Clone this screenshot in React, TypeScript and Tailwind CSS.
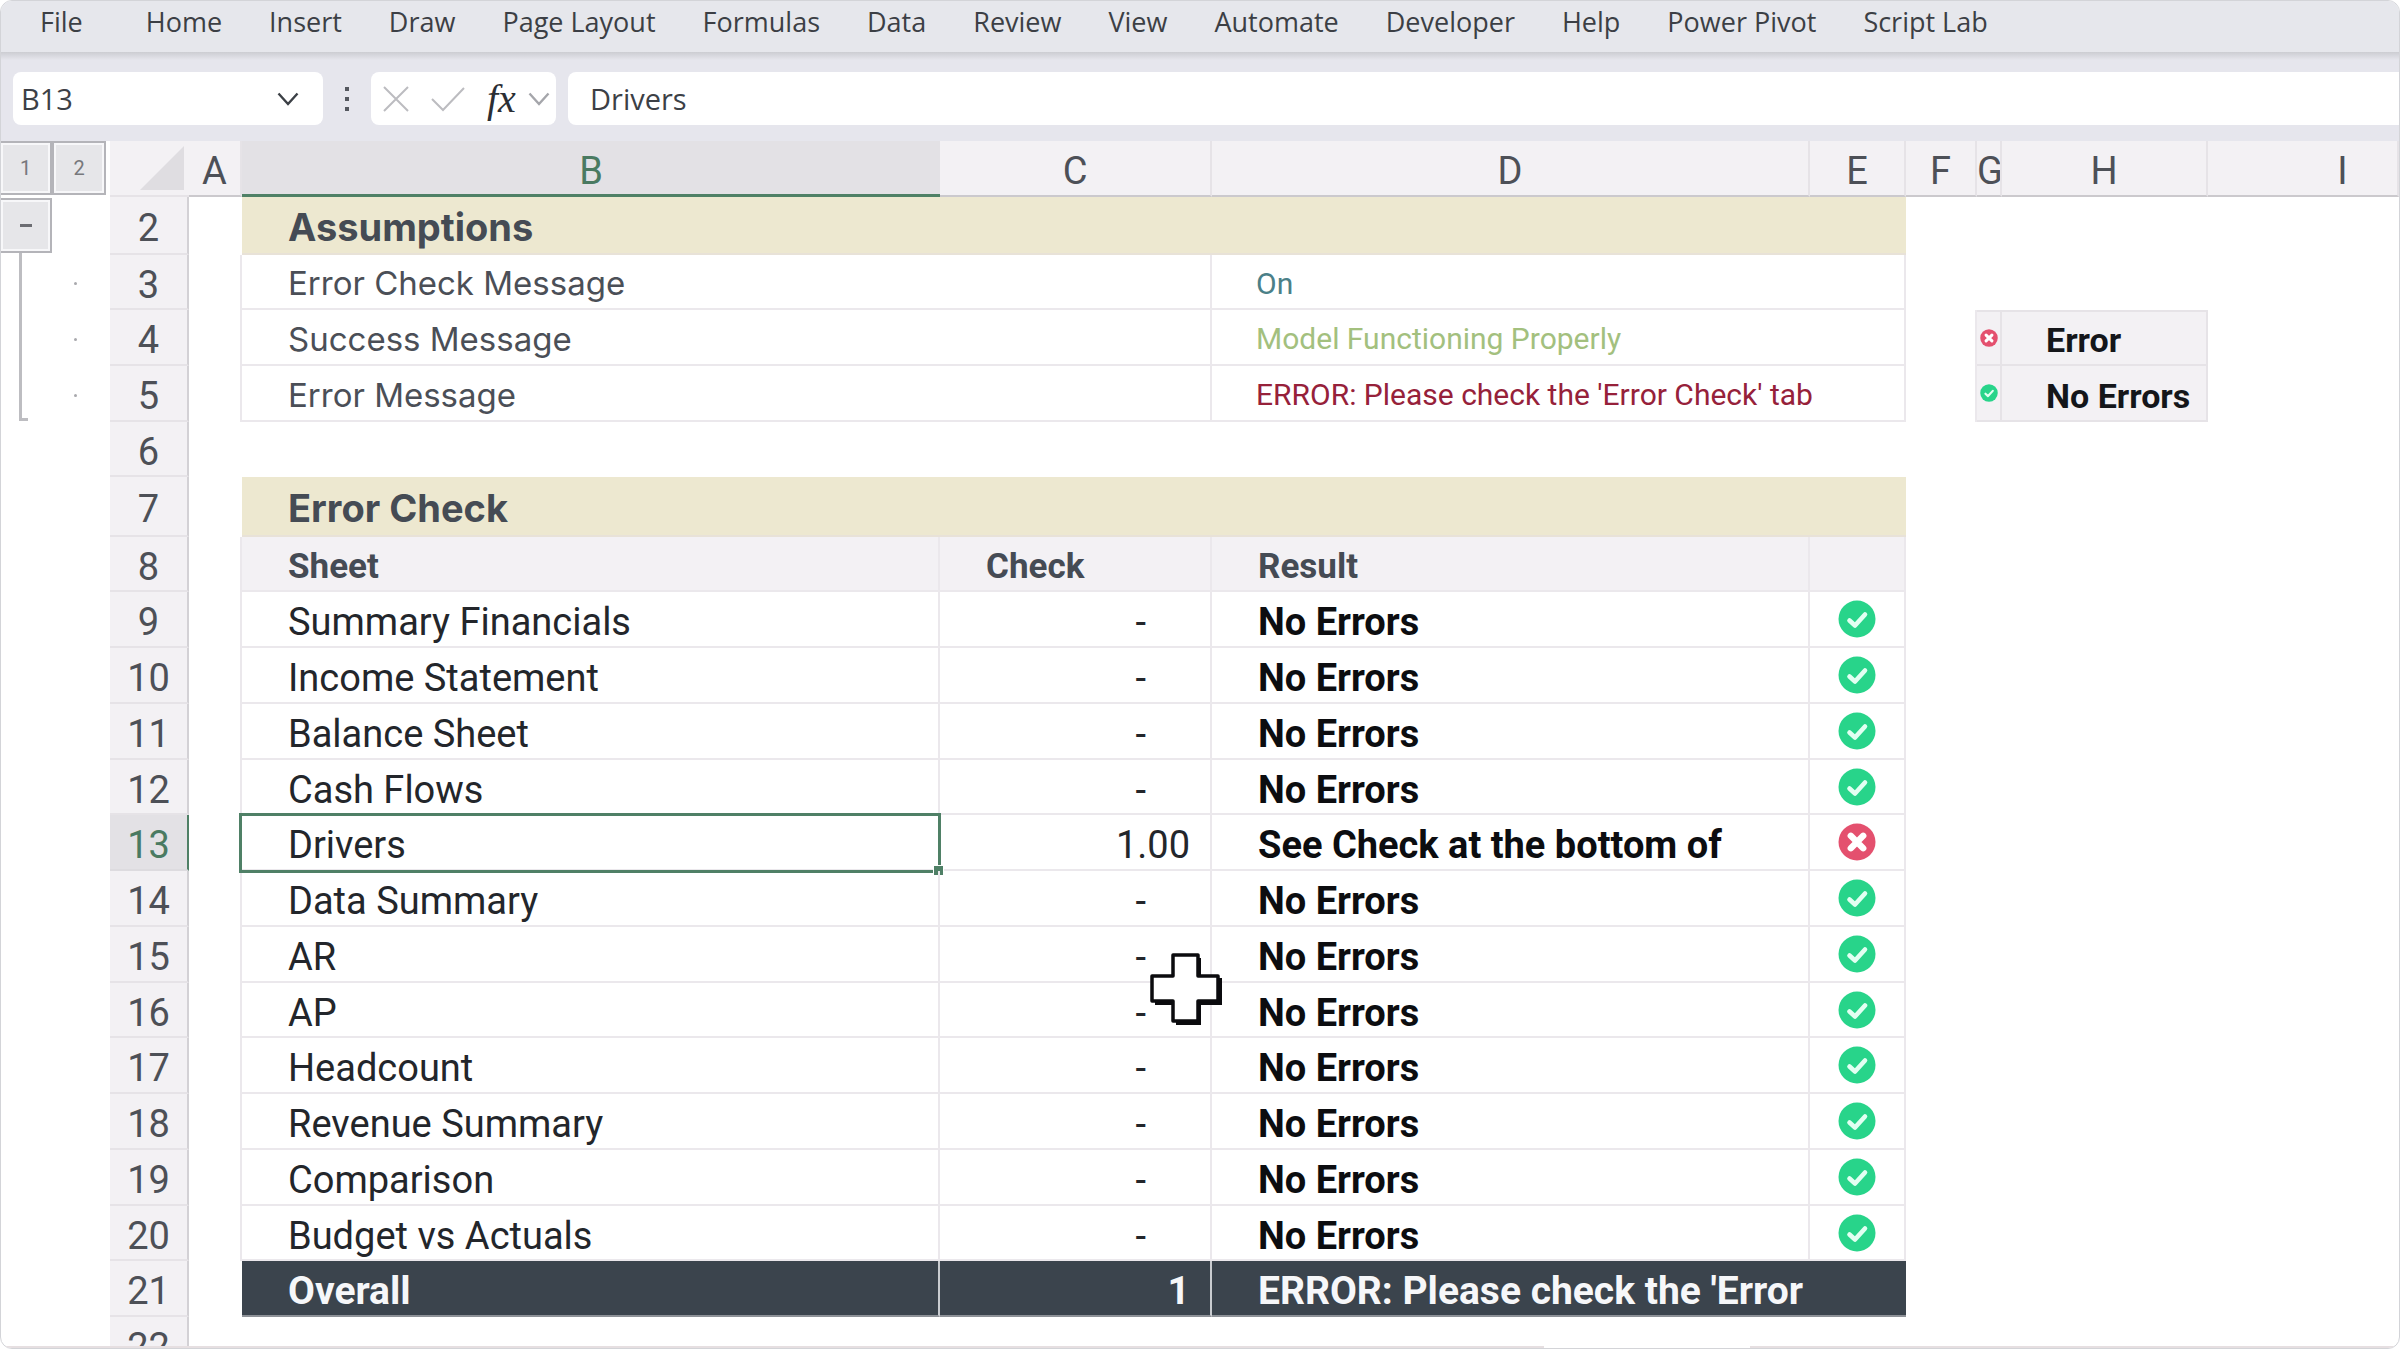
import { useState } from "react";
import type { ReactNode } from "react";

const MENU = [
  "File", "Home", "Insert", "Draw", "Page Layout", "Formulas", "Data", "Review",
  "View", "Automate", "Developer", "Help", "Power Pivot", "Script Lab",
];

type Check = { row: number; sheet: string; check: string; result: string; ok: boolean };

const CHECKS: Check[] = [
  { row: 9, sheet: "Summary Financials", check: "-", result: "No Errors", ok: true },
  { row: 10, sheet: "Income Statement", check: "-", result: "No Errors", ok: true },
  { row: 11, sheet: "Balance Sheet", check: "-", result: "No Errors", ok: true },
  { row: 12, sheet: "Cash Flows", check: "-", result: "No Errors", ok: true },
  { row: 13, sheet: "Drivers", check: "1.00", result: "See Check at the bottom of", ok: false },
  { row: 14, sheet: "Data Summary", check: "-", result: "No Errors", ok: true },
  { row: 15, sheet: "AR", check: "-", result: "No Errors", ok: true },
  { row: 16, sheet: "AP", check: "-", result: "No Errors", ok: true },
  { row: 17, sheet: "Headcount", check: "-", result: "No Errors", ok: true },
  { row: 18, sheet: "Revenue Summary", check: "-", result: "No Errors", ok: true },
  { row: 19, sheet: "Comparison", check: "-", result: "No Errors", ok: true },
  { row: 20, sheet: "Budget vs Actuals", check: "-", result: "No Errors", ok: true },
];

const SELECTED_ROW = 13;

function StatusIcon({ ok, small }: { ok: boolean; small?: boolean }) {
  return (
    <svg
      viewBox="0 0 38 38"
      className={small ? "block mx-auto size-[18px]" : "block mx-auto size-[38px]"}
      role="img"
      aria-label={ok ? "No error" : "Error"}
    >
      <circle cx="19" cy="19" r="18.5" fill={ok ? "#28d48a" : "#e4506e"} />
      {ok ? (
        <path
          d="M11.5 20.5l5.5 5L27 14.5"
          fill="none"
          stroke="#e2fff2"
          strokeWidth="4.6"
          strokeLinecap="round"
          strokeLinejoin="round"
        />
      ) : (
        <path d="M12.8 12.8l12.4 12.4M25.2 12.8L12.8 25.2" stroke="#fff" strokeWidth="6.4" strokeLinecap="round" />
      )}
    </svg>
  );
}

function Chevron({ className }: { className: string }) {
  return (
    <svg viewBox="0 0 22 14" className={className} fill="none" stroke="currentColor" strokeWidth="2.4" aria-hidden="true">
      <path d="M1.5 1.5L11 12l9.5-10.5" />
    </svg>
  );
}

function MenuBar() {
  return (
    <nav className="flex h-[51px] items-center gap-[47px] bg-[#e6e7ec] pb-2.5 pl-[39px] font-['Open_Sans',sans-serif] text-[27px] leading-8 text-[#3c3f45]">
      {MENU.map((item) => (
        <button key={item} type="button" className="whitespace-nowrap first:mr-4">
          {item}
        </button>
      ))}
    </nav>
  );
}

function FormulaBar() {
  const [name, setName] = useState("B13");
  const [formula, setFormula] = useState("Drivers");
  return (
    <div className="bg-[#e6e6ed]">
      <div className="h-2 bg-linear-to-b from-[#cccdd2] to-[#e6e6ed]" />
      <div className="flex h-[81px] items-start pt-3 pl-3 font-['Open_Sans',sans-serif] text-[29px] text-[#3c4046]">
        <div className="flex h-[53px] w-[310px] items-center rounded-lg bg-white pr-6 pl-2">
          <input
            aria-label="Name box"
            value={name}
            onChange={(e) => setName(e.target.value)}
            className="min-w-0 flex-1 outline-none"
          />
          <button type="button" aria-label="Show names">
            <Chevron className="h-3.5 w-[22px]" />
          </button>
        </div>
        <div className="flex h-[53px] w-12 flex-col items-center justify-center gap-1.5">
          <span className="size-1 bg-[#55585f]" />
          <span className="size-1 bg-[#55585f]" />
          <span className="size-1 bg-[#55585f]" />
        </div>
        <div className="flex h-[53px] w-[185px] items-center rounded-lg bg-white pl-3">
          <button type="button" aria-label="Cancel" className="text-[#bcbcc0]">
            <svg viewBox="0 0 26 28" className="h-7 w-[26px]" stroke="currentColor" strokeWidth="2" aria-hidden="true">
              <path d="M1 2l24 24M25 2L1 26" />
            </svg>
          </button>
          <button type="button" aria-label="Enter" className="ml-[22px] text-[#bcbcc0]">
            <svg viewBox="0 0 34 26" className="h-[26px] w-[34px]" fill="none" stroke="currentColor" strokeWidth="2" aria-hidden="true">
              <path d="M1 13l11 11L33 2" />
            </svg>
          </button>
          <button
            type="button"
            aria-label="Insert function"
            className="ml-[22px] font-['Liberation_Serif',serif] text-[40px] leading-none text-[#2b2e34] italic"
          >
            fx
          </button>
          <button type="button" aria-label="Function list" className="ml-3 text-[#a5a6ab]">
            <Chevron className="h-3.5 w-[22px]" />
          </button>
        </div>
        <input
          aria-label="Formula bar"
          value={formula}
          onChange={(e) => setFormula(e.target.value)}
          className="ml-3 h-[53px] min-w-0 flex-1 rounded-l-lg bg-white pl-[22px] outline-none"
        />
      </div>
    </div>
  );
}

function OutlineButton({ label, children, className }: { label: string; children: ReactNode; className: string }) {
  return (
    <button
      type="button"
      aria-label={label}
      className={`${className} border-2 border-[#b4b4b9] bg-[#e6e6e9] text-xl text-[#77787c] shadow-[inset_0_0_0_2px_#f7f7f9]`}
    >
      {children}
    </button>
  );
}

function OutlineGutter() {
  return (
    <aside className="w-[109px] shrink-0 font-['Roboto',sans-serif]">
      <div className="flex">
        <OutlineButton label="Level 1" className="h-[54px] w-[51px] border-l-0">1</OutlineButton>
        <OutlineButton label="Level 2" className="h-[54px] w-[54px]">2</OutlineButton>
      </div>
      <div className="flex pt-[3px]">
        <div className="w-[51px]">
          <OutlineButton label="Collapse rows" className="flex h-[55px] w-[51px] items-center justify-center border-l-0">
            <span className="h-[3px] w-3 bg-[#6c6d72]" />
          </OutlineButton>
          <div className="ml-[18px] h-[168px] w-[9px] border-b-[3px] border-l-[3px] border-[#bdbdc1]" />
        </div>
        <div className="flex flex-col gap-[53px] pt-[84px] pl-[22px]">
          <span className="size-[3px] rounded-full bg-[#a9a9ad]" />
          <span className="size-[3px] rounded-full bg-[#a9a9ad]" />
          <span className="size-[3px] rounded-full bg-[#a9a9ad]" />
        </div>
      </div>
    </aside>
  );
}

function ColumnHead({ children, className = "" }: { children?: ReactNode; className?: string }) {
  return (
    <th scope="col" className={`overflow-hidden border-r-2 border-b-2 border-r-[#e6e3e7] border-b-[#cbc9cd] p-0 pt-1.5 font-normal ${className}`}>
      {children}
    </th>
  );
}

function RowHead({ row }: { row: number }) {
  const selected = row === SELECTED_ROW;
  return (
    <th
      scope="row"
      className={`border-r-2 border-b-2 p-0 pt-1.5 text-[38px] font-normal ${
        selected
          ? "border-r-[#4f8066] border-b-[#dddbdf] bg-[#e3e1e5] text-[#4a7a61]"
          : "border-r-[#d3d1d5] border-b-[#e6e3e7] bg-[#f3f1f4] text-[#4d5057]"
      }`}
    >
      {row}
    </th>
  );
}

const CELL = "border-r-2 border-b-2 border-[#ebe8ec] p-0";
const EDGE = "border-r-2 border-r-[#ebe8ec] p-0";
const BAND =
  "border-b-2 border-[#e8e2d8] bg-[#ede8d0] p-0 pt-1 pl-[46px] text-left font-['Inter',sans-serif] font-bold text-[#454b54]";
const LABEL = "pt-1 pl-[46px] text-left font-['Inter',sans-serif] text-[33px] font-normal text-[#4b4f57]";
const LEGEND = "border-2 border-l-0 border-[#e6e3e7] bg-[#f3f1f4] p-0";
const TOTAL = "border-b-2 border-b-[#8d9197] bg-[#3b444d] p-0 pt-1.5";

function Sheet() {
  return (
    <table className="w-full min-w-0 table-fixed border-separate border-spacing-0 self-start font-['Roboto',sans-serif] text-[38px] leading-none text-[#23262b]">
      <colgroup>
        <col className="w-[79px]" />
        <col className="w-[53px]" />
        <col className="w-[698px]" />
        <col className="w-[272px]" />
        <col className="w-[598px]" />
        <col className="w-[96px]" />
        <col className="w-[71px]" />
        <col className="w-[25px]" />
        <col className="w-[206px]" />
        <col />
      </colgroup>
      <thead>
        <tr className="h-14 bg-[#f3f1f4] text-[#4d5057]">
          <td className="border-b-2 border-[#e6e3e7] p-0">
            <svg viewBox="0 0 44 44" className="ml-[30px] size-11" aria-hidden="true">
              <path d="M44 0v44H0z" fill="#dfdde1" />
            </svg>
          </td>
          <ColumnHead>A</ColumnHead>
          <th scope="col" className="border-b-[3px] border-[#4f8066] bg-[#e3e1e5] p-0 pt-1.5 font-normal text-[#4a7a61]">
            B
          </th>
          <ColumnHead>C</ColumnHead>
          <ColumnHead>D</ColumnHead>
          <ColumnHead>E</ColumnHead>
          <ColumnHead>F</ColumnHead>
          <ColumnHead>G</ColumnHead>
          <ColumnHead>H</ColumnHead>
          <ColumnHead className="border-r-0 pl-20">I</ColumnHead>
        </tr>
      </thead>
      <tbody>
        <tr className="h-[58px]">
          <RowHead row={2} />
          <td className="p-0" />
          <th colSpan={4} className={BAND}>Assumptions</th>
        </tr>
        <tr className="h-[55px]">
          <RowHead row={3} />
          <td className={EDGE} />
          <th scope="row" colSpan={2} className={`${CELL} ${LABEL}`}>Error Check Message</th>
          <td colSpan={2} className={`${CELL} pt-1 pl-11 text-[30px] text-[#4b8088]`}>On</td>
        </tr>
        <tr className="h-14">
          <RowHead row={4} />
          <td className={EDGE} />
          <th scope="row" colSpan={2} className={`${CELL} ${LABEL}`}>Success Message</th>
          <td colSpan={2} className={`${CELL} pt-1 pl-11 text-[30px] text-[#a3c07e]`}>Model Functioning Properly</td>
          <td className={EDGE} />
          <td className={LEGEND}><StatusIcon ok={false} small /></td>
          <td className={`${LEGEND} pt-1 pl-11 text-[34px] font-bold text-[#14161a]`}>Error</td>
        </tr>
        <tr className="h-14">
          <RowHead row={5} />
          <td className={EDGE} />
          <th scope="row" colSpan={2} className={`${CELL} ${LABEL}`}>Error Message</th>
          <td colSpan={2} className={`${CELL} pt-1 pl-11 text-[30px] text-[#96213a]`}>
            ERROR: Please check the 'Error Check' tab
          </td>
          <td className={EDGE} />
          <td className={`${LEGEND} border-t-0`}><StatusIcon ok small /></td>
          <td className={`${LEGEND} border-t-0 pt-1.5 pl-11 text-[34px] font-bold whitespace-nowrap text-[#14161a]`}>No Errors</td>
        </tr>
        <tr className="h-[55px]">
          <RowHead row={6} />
        </tr>
        <tr className="h-[60px]">
          <RowHead row={7} />
          <td className="p-0" />
          <th colSpan={4} className={BAND}>Error Check</th>
        </tr>
        <tr className="h-[55px] text-[35px] text-[#454b54]">
          <RowHead row={8} />
          <td className={EDGE} />
          <th scope="col" className={`${CELL} bg-[#f3f1f4] pt-1.5 pl-[46px] text-left`}>Sheet</th>
          <th scope="col" className={`${CELL} bg-[#f3f1f4] pt-1.5 pl-[46px] text-left`}>Check</th>
          <th scope="col" className={`${CELL} bg-[#f3f1f4] pt-1.5 pl-[46px] text-left`}>Result</th>
          <td className={`${CELL} bg-[#f3f1f4]`} />
        </tr>
        {CHECKS.map((c) => (
          <tr key={c.row} className={c.row % 4 === 0 ? "h-[55px]" : "h-14"}>
            <RowHead row={c.row} />
            <td className={EDGE} />
            <td className={`${CELL} relative pt-1.5 pl-[46px]`}>
              {c.sheet}
              {c.row === SELECTED_ROW && (
                <span className="absolute -top-0.5 -right-[3px] -bottom-1 -left-[3px] border-[3px] border-[#4f8066]">
                  <span className="absolute -right-1.5 -bottom-1.5 size-[11px] border border-white bg-[#4f8066]" />
                </span>
              )}
            </td>
            <td className={`${CELL} pt-1.5 text-right ${c.check === "-" ? "pr-16" : "pr-5"}`}>{c.check}</td>
            <td className={`${CELL} pt-1.5 pl-[46px] font-bold text-[#0c0d10] ${c.row === 20 ? "border-r-0" : ""}`}>{c.result}</td>
            <td className={CELL}><StatusIcon ok={c.ok} /></td>
          </tr>
        ))}
        <tr className="h-14 text-[39px] font-bold text-[#f6f7f9]">
          <RowHead row={21} />
          <td className="p-0" />
          <td className={`${TOTAL} border-r-2 border-r-[#c9ccd0] pl-[46px]`}>Overall</td>
          <td className={`${TOTAL} border-r-2 border-r-[#c9ccd0] pr-5 text-right`}>1</td>
          <td colSpan={2} className={`${TOTAL} pl-[46px]`}>ERROR: Please check the 'Error</td>
        </tr>
        <tr className="h-14">
          <RowHead row={22} />
        </tr>
      </tbody>
    </table>
  );
}

function CellCursor() {
  return (
    <svg viewBox="0 0 72 72" className="pointer-events-none absolute top-[812px] left-[1149px] size-[72px]" aria-hidden="true">
      <path d="M26 5h25v20h21v27H51v20H26V52H5V26h21z" fill="#0b0b0e" />
      <path d="M23 2h25v21h20v25H48v20H23V48H2V23h21z" fill="#fff" stroke="#0b0b0e" strokeWidth="3.5" strokeLinejoin="round" />
    </svg>
  );
}

export default function App() {
  return (
    <div className="flex h-screen flex-col overflow-hidden rounded-xl border border-[#d3d4d8] bg-white">
      <MenuBar />
      <FormulaBar />
      <main className="relative flex min-h-0 flex-1 overflow-hidden">
        <OutlineGutter />
        <Sheet />
        <CellCursor />
      </main>
      <footer className="flex h-0.5 shrink-0 gap-[206px]">
        <div className="flex-[1544] bg-[#e6dfe1]" />
        <div className="flex-[650] bg-[#e6dfe1]" />
      </footer>
    </div>
  );
}
